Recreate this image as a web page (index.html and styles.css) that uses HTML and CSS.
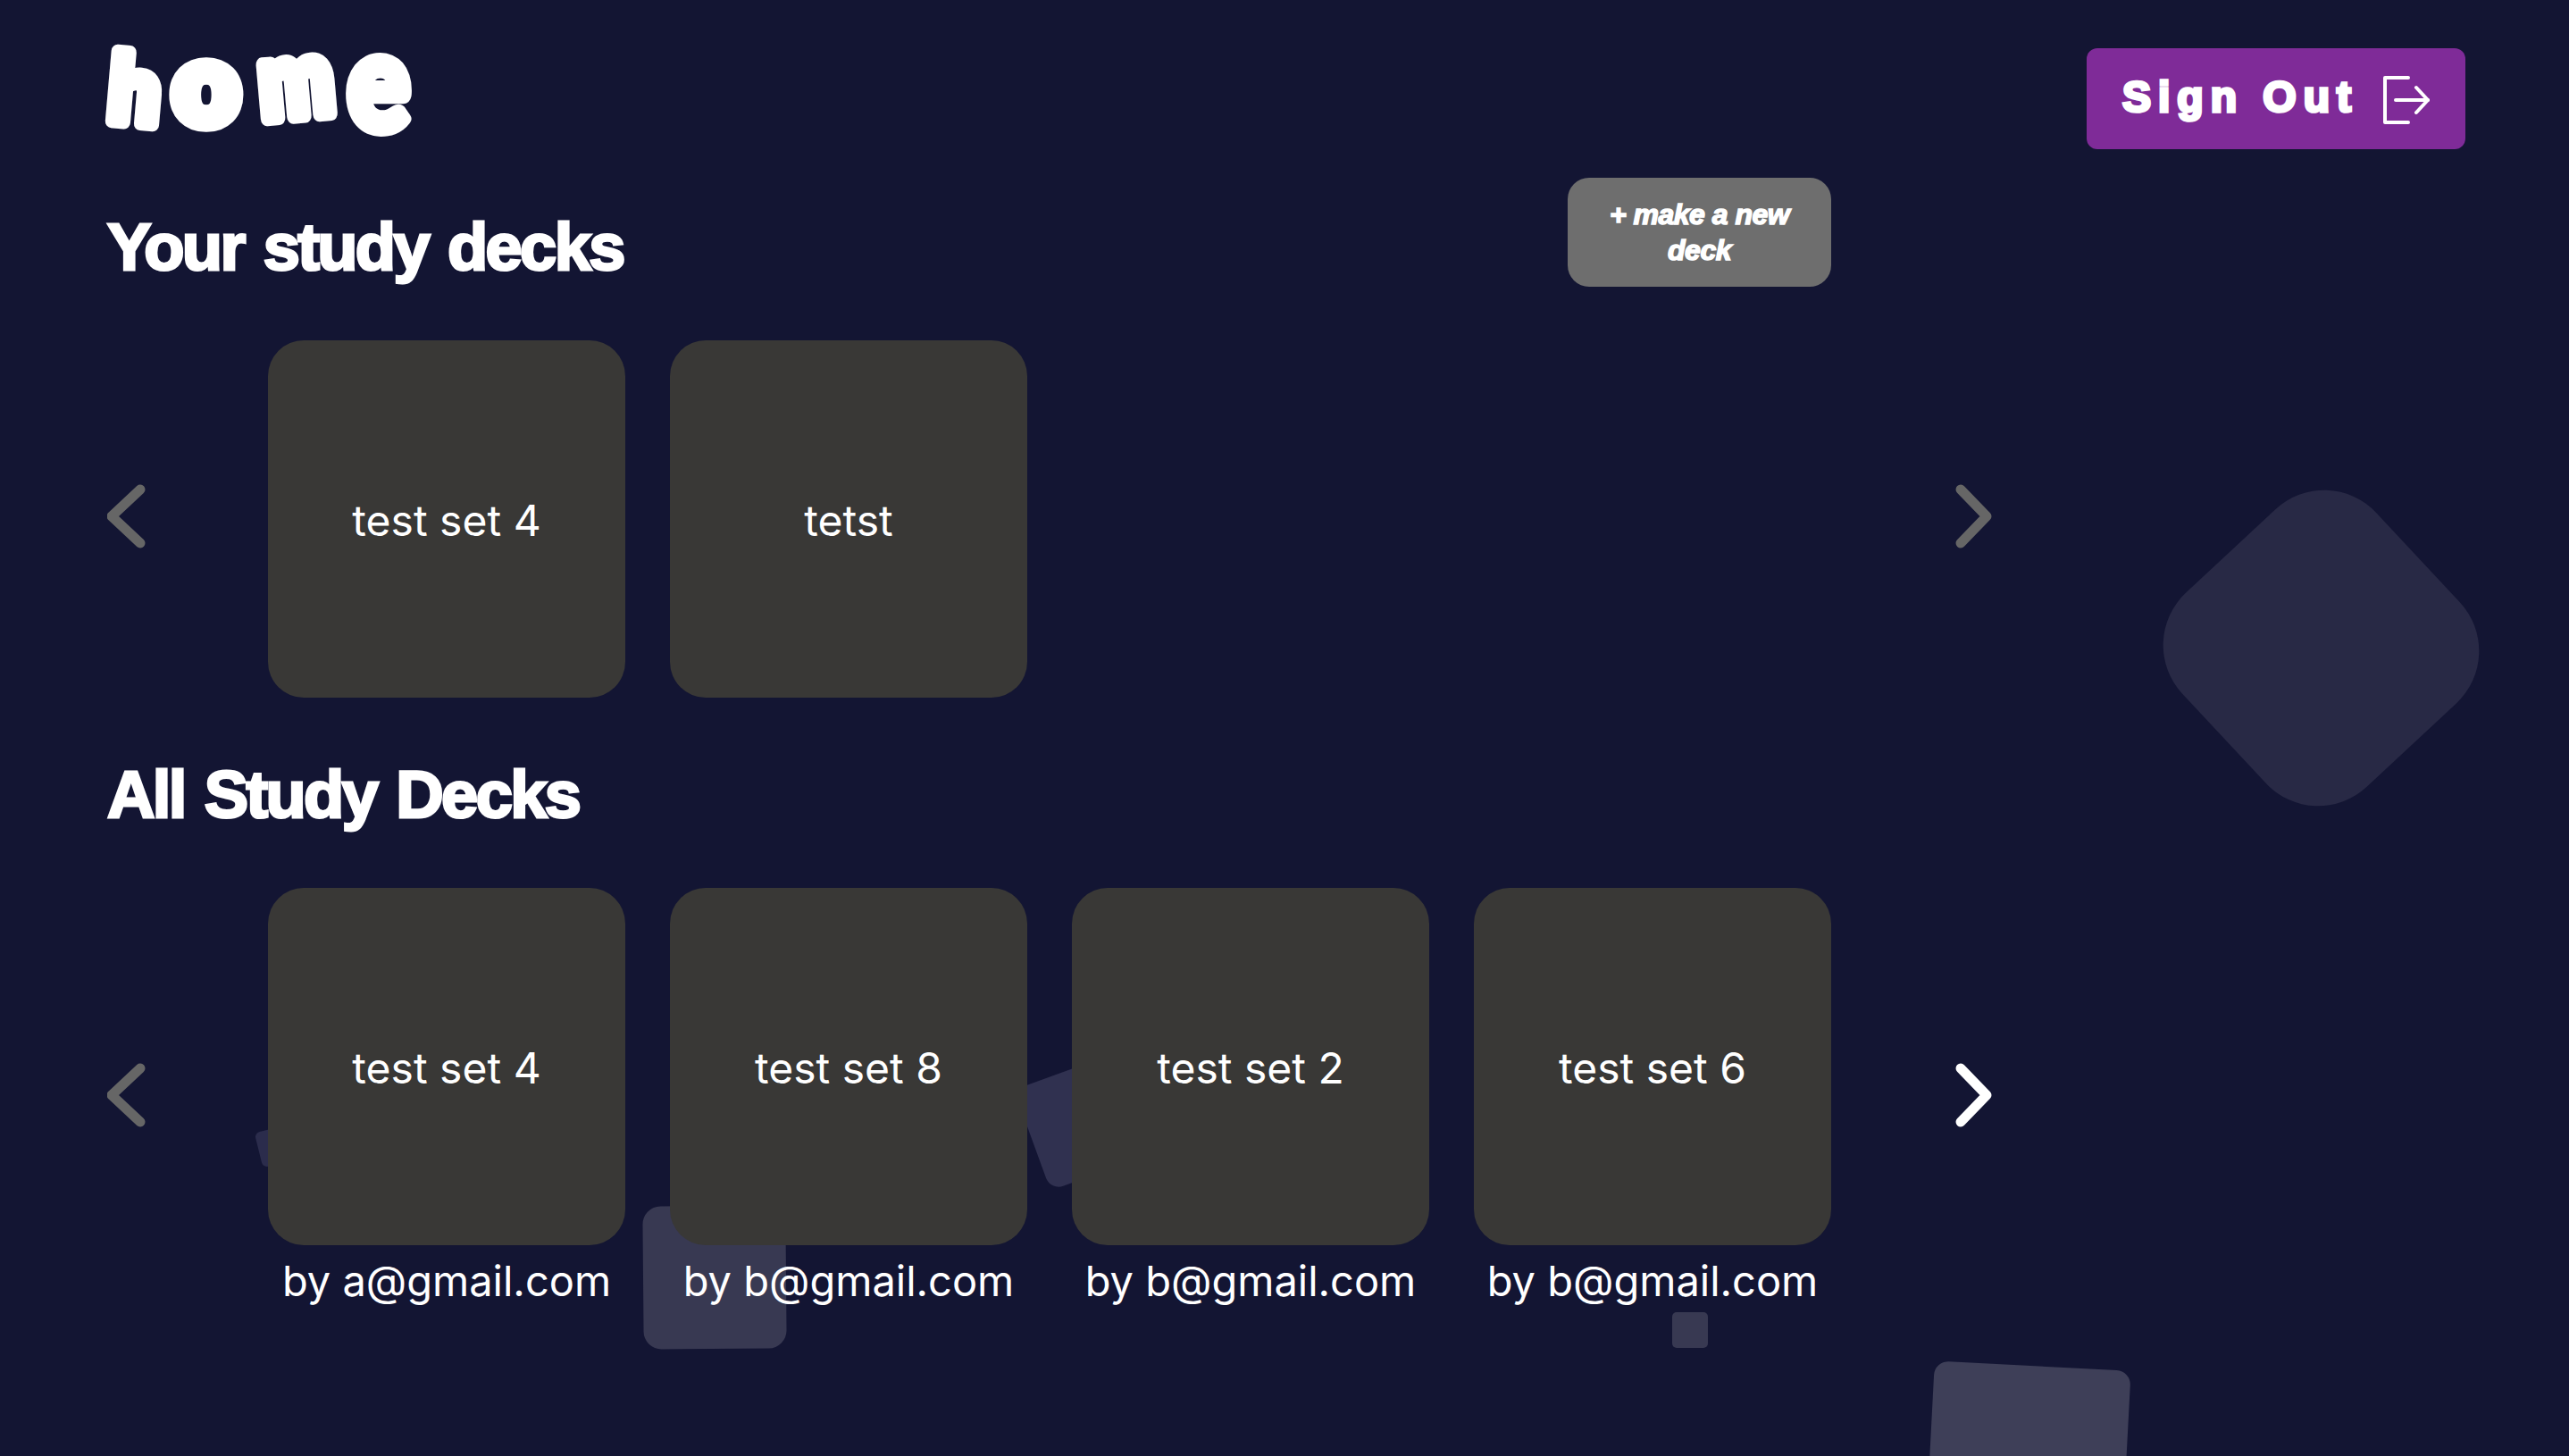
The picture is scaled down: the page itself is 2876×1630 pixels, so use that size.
FILE: index.html
```html
<!DOCTYPE html>
<html>
<head>
    <title>Home</title>
    <link rel="stylesheet" href="styles.css">
</head>
<body>
    <div class="bg-layer">
        <div class="bg-square bg-diamond"></div>
        <div class="bg-square bg-left"></div>
        <div class="bg-square bg-middle"></div>
        <div class="bg-square bg-under"></div>
        <div class="bg-square bg-tiny"></div>
        <div class="bg-square bg-bottom"></div>
    </div>

    <div class="page">
        <header class="top-bar">
            <h1 class="logo">
                <svg viewBox="-10 -50 370 170" width="370" height="170">
                    <text x="35" y="88" transform="rotate(5 35 50) translate(35 88) scale(0.84 0.88) translate(-35 -88)">h</text>
                    <text x="115" y="88" transform="translate(115 88) scale(1.05 1.04) translate(-115 -88)">o</text>
                    <text x="216" y="80" transform="rotate(-5 216 50) translate(216 80) scale(0.82 0.98) translate(-216 -80)">m</text>
                    <text class="l-e" x="308" y="95" transform="translate(308 95) scale(1.08 1.26) translate(-308 -95)">e</text>
                </svg>
            </h1>
            <button class="sign-out">
                <span>Sign Out</span>
                <svg class="sign-out-icon" viewBox="0 0 52 54" width="52" height="54" fill="none" stroke="#fff" stroke-width="4" stroke-linecap="round" stroke-linejoin="round">
                    <path d="M28 2H2V52H28"/>
                    <path d="M14 27H50"/>
                    <path d="M37 13L50 27L37 41"/>
                </svg>
            </button>
        </header>

        <section class="deck-section">
            <div class="section-head">
                <h2>Your study decks</h2>
                <button class="new-deck">+ make a new deck</button>
            </div>
            <div class="carousel">
                <div class="arrow-col">
                    <svg class="arrow off" viewBox="0 0 46 72" width="46" height="72"><path d="M37 6L5 36L37 66"/></svg>
                </div>
                <div class="deck-row">
                    <div class="deck-item"><div class="deck-card">test set 4</div></div>
                    <div class="deck-item"><div class="deck-card">tetst</div></div>
                </div>
                <div class="arrow-col right">
                    <svg class="arrow off" viewBox="0 0 46 72" width="46" height="72"><path d="M8 6L37 36L8 66"/></svg>
                </div>
            </div>
        </section>

        <section class="deck-section">
            <div class="section-head">
                <h2>All Study Decks</h2>
            </div>
            <div class="carousel">
                <div class="arrow-col">
                    <svg class="arrow off" viewBox="0 0 46 72" width="46" height="72"><path d="M37 6L5 36L37 66"/></svg>
                </div>
                <div class="deck-row">
                    <div class="deck-item"><div class="deck-card">test set 4</div><p class="deck-author">by a@gmail.com</p></div>
                    <div class="deck-item"><div class="deck-card">test set 8</div><p class="deck-author">by b@gmail.com</p></div>
                    <div class="deck-item"><div class="deck-card">test set 2</div><p class="deck-author">by b@gmail.com</p></div>
                    <div class="deck-item"><div class="deck-card">test set 6</div><p class="deck-author">by b@gmail.com</p></div>
                </div>
                <div class="arrow-col right">
                    <svg class="arrow" viewBox="0 0 46 72" width="46" height="72"><path d="M8 6L37 36L8 66"/></svg>
                </div>
            </div>
        </section>
    </div>
</body>
</html>
```

FILE: styles.css
```css
/* home page */
html, body {
    margin: 0;
    padding: 0;
    height: 100%;
}

body {
    position: relative;
    overflow: hidden;
    background: #131533;
    color: #fff;
    font-family: "Inter", sans-serif;
}

.page {
    position: relative;
    padding: 54px 116px 0 120px;
}

/* floating squares behind everything */
.bg-layer {
    position: absolute;
    inset: 0;
    overflow: hidden;
}

.bg-square {
    position: absolute;
}

.bg-diamond {
    left: 2450px;
    top: 577px;
    width: 297px;
    height: 297px;
    border-radius: 80px;
    background: #282945;
    transform: rotate(47deg);
}

.bg-left {
    left: 289px;
    top: 1263px;
    width: 40px;
    height: 40px;
    border-radius: 6px;
    background: #2b2c4c;
    transform: rotate(-14deg);
}

.bg-middle {
    left: 1152px;
    top: 1196px;
    width: 120px;
    height: 120px;
    border-radius: 15px;
    background: #303150;
    transform: rotate(-20deg);
}

.bg-under {
    left: 720px;
    top: 1350px;
    width: 160px;
    height: 160px;
    border-radius: 20px;
    background: #383952;
    transform: rotate(-0.5deg);
}

.bg-tiny {
    left: 1872px;
    top: 1469px;
    width: 40px;
    height: 40px;
    border-radius: 5px;
    background: #383952;
}

.bg-bottom {
    left: 2160px;
    top: 1529px;
    width: 220px;
    height: 220px;
    border-radius: 16px;
    background: #3e3f58;
    transform: rotate(3deg);
}

/* header */
.top-bar {
    display: flex;
    justify-content: space-between;
    align-items: flex-start;
    height: 113px;
}

.logo {
    margin: -54px 0 0 -14px;
    height: 113px;
    line-height: 0;
}

.logo svg {
    overflow: visible;
}

.logo text {
    font-family: "Lato", sans-serif;
    font-weight: 900;
    font-size: 120px;
    text-anchor: middle;
    fill: #fff;
    stroke: #fff;
    stroke-width: 17;
    stroke-linejoin: round;
}

.logo .l-e {
    stroke-width: 11;
}

.sign-out {
    display: flex;
    align-items: center;
    gap: 30px;
    width: 424px;
    height: 113px;
    padding: 0 0 4px 40px;
    border: none;
    border-radius: 12px;
    background: #7f2b98;
    color: #fff;
    font-family: "Liberation Sans", Arial, sans-serif;
    font-weight: 700;
    font-size: 48px;
    letter-spacing: 8px;
    -webkit-text-stroke: 3.5px #fff;
}

.sign-out-icon {
    flex: none;
    margin-top: 6px;
    margin-left: -2px;
}

/* sections */
.deck-section {
    width: 2140px;
    margin-bottom: 31px;
}

.section-head {
    display: flex;
    justify-content: space-between;
    align-items: center;
    width: 1930px;
    height: 122px;
    margin-top: 32px;
    margin-bottom: 60px;
}

.deck-section + .deck-section .section-head {
    margin-top: 0;
}

.section-head h2 {
    margin: 0;
    padding-top: 32px;
    font-family: "Liberation Sans", Arial, sans-serif;
    font-weight: 700;
    font-size: 74px;
    letter-spacing: -2.6px;
    word-spacing: 4px;
    -webkit-text-stroke: 3px #fff;
}

.new-deck {
    width: 295px;
    height: 122px;
    padding: 0 30px;
    border: none;
    border-radius: 24px;
    background: #6e6e6e;
    color: #fff;
    font-family: "Liberation Sans", Arial, sans-serif;
    font-weight: 700;
    font-style: italic;
    font-size: 32px;
    line-height: 40px;
    letter-spacing: -0.5px;
    -webkit-text-stroke: 1.5px #fff;
}

/* carousel */
.carousel {
    display: flex;
    align-items: center;
}

.arrow-col {
    flex: none;
    width: 180px;
    display: flex;
    padding-bottom: 6px;
    box-sizing: border-box;
}

.arrow-col.right {
    width: auto;
    padding-left: 137px;
}

.arrow {
    fill: none;
    stroke: #fff;
    stroke-width: 11;
    stroke-linecap: round;
    stroke-linejoin: round;
}

.arrow.off {
    stroke: #666;
}

.deck-row {
    flex: none;
    width: 1750px;
    display: flex;
    gap: 50px;
}

.deck-item {
    width: 400px;
    display: flex;
    flex-direction: column;
    align-items: center;
}

.deck-card {
    width: 400px;
    height: 400px;
    border-radius: 40px;
    background: #393836;
    display: flex;
    justify-content: center;
    align-items: center;
    font-size: 48px;
    padding-top: 2px;
    box-sizing: border-box;
}

.deck-author {
    margin: 11px 0 0 0;
    font-size: 47px;
    line-height: 58px;
    white-space: nowrap;
}
```
